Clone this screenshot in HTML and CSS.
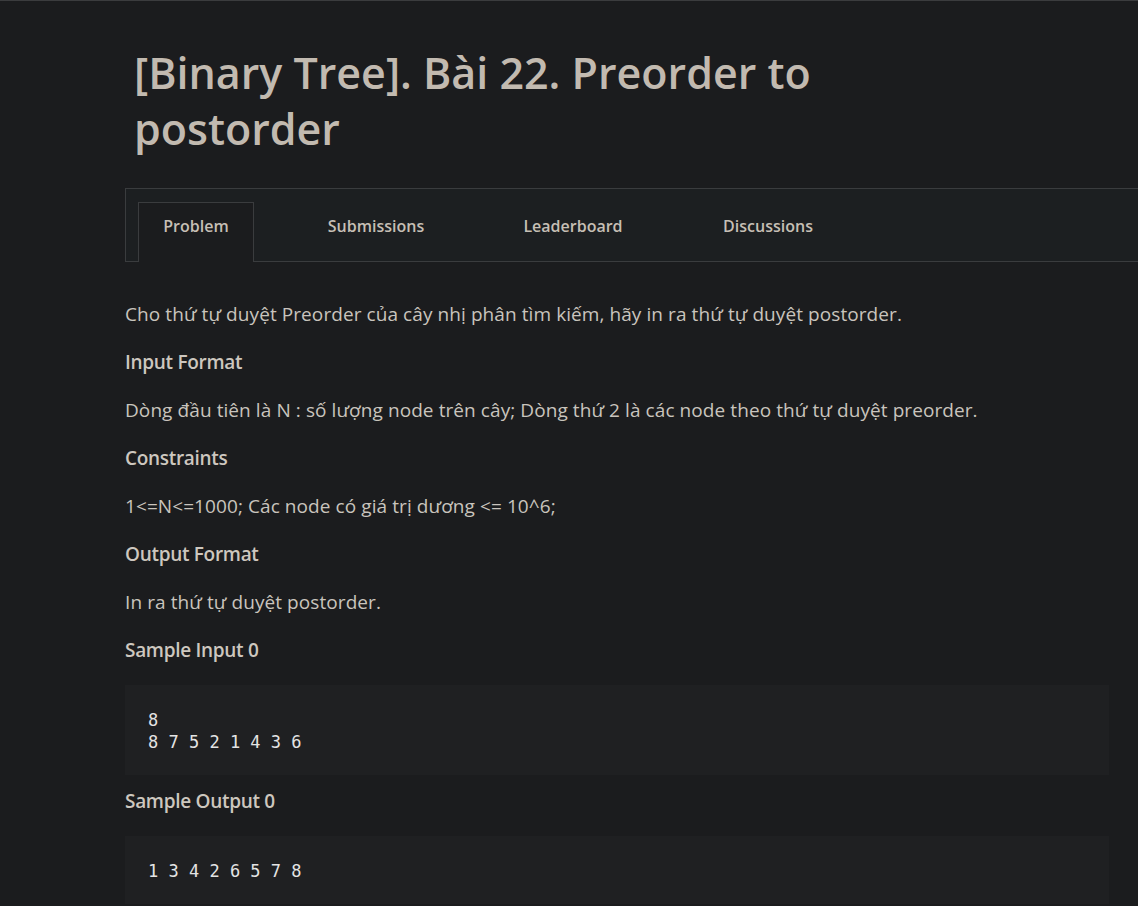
FILE: index.html
```html
<!DOCTYPE html>
<html lang="vi">
<head>
<meta charset="utf-8">
<title>Preorder to postorder</title>
<link rel="stylesheet" href="styles.css">
</head>
<body>
<div class="page">
  <h1 class="title">[Binary Tree]. Bài 22. Preorder to postorder</h1>
  <nav class="tabs">
    <a class="tab active">Problem</a>
    <a class="tab">Submissions</a>
    <a class="tab">Leaderboard</a>
    <a class="tab">Discussions</a>
  </nav>
  <div class="content">
    <p class="para">Cho thứ tự duyệt Preorder của cây nhị phân tìm kiếm, hãy in ra thứ tự duyệt postorder.</p>
    <h3 class="heading">Input Format</h3>
    <p class="para">Dòng đầu tiên là N : số lượng node trên cây; Dòng thứ 2 là các node theo thứ tự duyệt preorder.</p>
    <h3 class="heading">Constraints</h3>
    <p class="para">1&lt;=N&lt;=1000; Các node có giá trị dương &lt;= 10^6;</p>
    <h3 class="heading">Output Format</h3>
    <p class="para">In ra thứ tự duyệt postorder.</p>
    <h3 class="heading">Sample Input 0</h3>
    <pre class="code">8
8 7 5 2 1 4 3 6</pre>
    <h3 class="heading">Sample Output 0</h3>
    <pre class="code">1 3 4 2 6 5 7 8</pre>
  </div>
</div>
</body>
</html>
```
FILE: styles.css
```css
html, body {
  margin: 0;
  padding: 0;
  background: #1b1c1e;
}
body {
  border-top: 1px solid #3b3c3e;
  font-family: "Open Sans", "Noto Sans", sans-serif;
  color: #c9c4bd;
  overflow: hidden;
}
.page {
  margin-left: 125px;
  width: 1040px;
}
.title {
  margin: 44px 0 31px 9px;
  width: 720px;
  font-size: 43px;
  line-height: 56px;
  font-weight: 600;
  color: #c2bab0;
}
.tabs {
  display: flex;
  align-items: flex-end;
  border: 1px solid #3a3c3e;
  background: #1c1f21;
  padding-left: 12px;
  box-sizing: border-box;
  height: 74px;
}
.tab {
  font-size: 16px;
  font-weight: 600;
  color: #c6bfb5;
  height: 60px;
  padding-bottom: 14px;
  display: flex;
  align-items: center;
  justify-content: center;
  box-sizing: border-box;
  border: 1px solid transparent;
  border-bottom: none;
  margin-bottom: -1px;
}
.tab:nth-child(1) { width: 116px; }
.tab:nth-child(2) { width: 244px; }
.tab:nth-child(3) { width: 150px; }
.tab:nth-child(4) { width: 240px; }
.tab.active {
  border-color: #3a3c3e;
  background: #1b1c1e;
}
.content {
  width: 984px;
  padding-top: 39px;
}
.para, .heading {
  margin: 0 0 21px;
  font-size: 19px;
  line-height: 27px;
}
.para { font-weight: 400; letter-spacing: 0.08px; }
.heading { font-weight: 600; color: #cdc7bf; letter-spacing: -0.3px; }
.code {
  margin: 0 0 13px;
  background: #1f2022;
  padding: 24px 23px 22px;
  font-family: "DejaVu Sans Mono", monospace;
  font-size: 17px;
  line-height: 22px;
  color: #e4e4e4;
  white-space: pre;
}
```
